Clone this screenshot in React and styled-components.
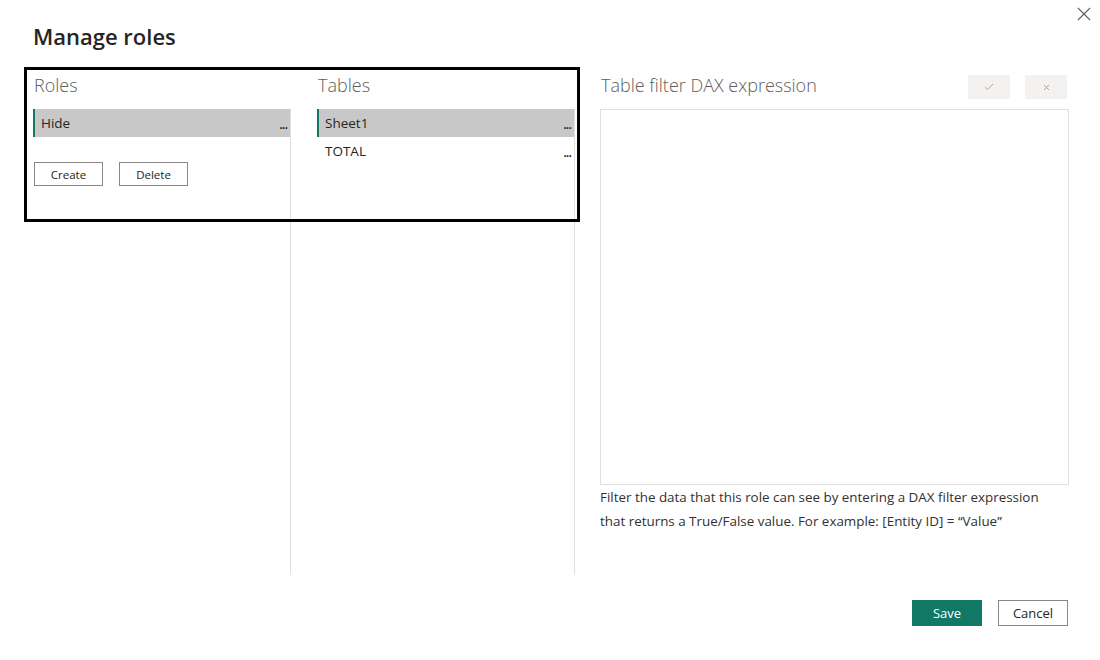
import styled, { createGlobalStyle } from "styled-components";

const Global = createGlobalStyle`
  html, body {
    margin: 0;
    padding: 0;
    background: #fff;
  }
  * {
    box-sizing: border-box;
  }
`;

const Dialog = styled.div`
  position: relative;
  width: 1100px;
  height: 660px;
  overflow: hidden;
  background: #fff;
  font-family: "Open Sans", "Noto Sans", sans-serif;
  color: #252423;
  display: flex;
  flex-direction: column;
`;

const Title = styled.h1`
  margin: 0;
  padding: 21px 0 0 33px;
  height: 67px;
  font-size: 22px;
  font-weight: 600;
  color: #252423;
`;

const CloseBtn = styled.button`
  position: absolute;
  top: 6px;
  right: 8px;
  width: 16px;
  height: 16px;
  padding: 0;
  border: 0;
  background: none;
  display: flex;
  align-items: center;
  justify-content: center;
`;

const Body = styled.div`
  display: flex;
  padding-left: 33px;
  height: 508px;
`;

const Column = styled.div`
  display: flex;
  flex-direction: column;
  width: ${(p) => p.$width}px;
  padding-left: ${(p) => p.$pad || 0}px;
`;

const Heading = styled.div`
  height: 42px;
  display: flex;
  align-items: center;
  justify-content: space-between;
  font-size: 18px;
  font-weight: 300;
  color: #605e5c;
  padding-left: 1px;
  padding-bottom: 6px;
`;

const List = styled.div`
  flex: 1;
  display: flex;
  flex-direction: column;
  border-right: 1px solid #e1dfdd;
`;

const Row = styled.div`
  height: 28px;
  display: flex;
  align-items: center;
  justify-content: space-between;
  padding: 0 3px 0 ${(p) => (p.$selected ? 6 : 8)}px;
  font-size: 13.5px;
  color: #252423;
  background: ${(p) => (p.$selected ? "#c8c8c8" : "transparent")};
  border-left: ${(p) => (p.$selected ? "2px solid #117865" : "none")};
`;

const More = styled.span`
  font-size: 13px;
  font-weight: 600;
  letter-spacing: -1px;
  padding-top: 1px;
`;

const ButtonRow = styled.div`
  display: flex;
  gap: 16px;
  margin-top: 25px;
  padding-left: 1px;
`;

const SmallButton = styled.button`
  width: 69px;
  height: 24px;
  padding: 0;
  border: 1px solid #8a8886;
  background: #fff;
  font-family: inherit;
  font-size: 11.5px;
  color: #252423;
`;

const IconButton = styled.button`
  width: 42px;
  height: 24px;
  border: 0;
  padding: 0;
  background: #f3f2f1;
  display: flex;
  align-items: center;
  justify-content: center;
`;

const HeadActions = styled.div`
  display: flex;
  gap: 15px;
  margin-right: 2px;
  margin-top: 4px;
`;

const Editor = styled.div`
  height: 376px;
  border: 1px solid #e1dfdd;
`;

const Help = styled.p`
  margin: 0;
  font-size: 13.4px;
  line-height: 24px;
  color: #323130;
`;

const Footer = styled.div`
  display: flex;
  justify-content: flex-end;
  gap: 16px;
  padding: 25px 32px 0 0;
`;

const FooterButton = styled.button`
  width: 70px;
  height: 26px;
  padding: 0;
  font-family: inherit;
  font-size: 13px;
  border: 1px solid ${(p) => (p.$primary ? "#117865" : "#8a8886")};
  background: ${(p) => (p.$primary ? "#117865" : "#fff")};
  color: ${(p) => (p.$primary ? "#fff" : "#252423")};
`;

const Highlight = styled.div`
  position: absolute;
  left: 24px;
  top: 67px;
  width: 556px;
  height: 155px;
  border: 3px solid #000;
  pointer-events: none;
`;

const App = () => {
  return (
    <Dialog>
      <Global />
      <Title>Manage roles</Title>
      <CloseBtn>
        <svg width="14" height="14" viewBox="0 0 14 14">
          <path d="M1 1L13 13M13 1L1 13" stroke="#605e5c" strokeWidth="1.1" fill="none" />
        </svg>
      </CloseBtn>
      <Body>
        <Column $width={258}>
          <Heading>Roles</Heading>
          <List>
            <Row $selected>
              <span>Hide</span>
              <More>...</More>
            </Row>
            <ButtonRow>
              <SmallButton>Create</SmallButton>
              <SmallButton>Delete</SmallButton>
            </ButtonRow>
          </List>
        </Column>
        <Column $width={284} $pad={26}>
          <Heading>Tables</Heading>
          <List>
            <Row $selected>
              <span>Sheet1</span>
              <More>...</More>
            </Row>
            <Row>
              <span>TOTAL</span>
              <More>...</More>
            </Row>
          </List>
        </Column>
        <Column $width={494} $pad={25}>
          <Heading>
            <span>Table filter DAX expression</span>
            <HeadActions>
              <IconButton>
                <svg width="10" height="8" viewBox="0 0 10 8">
                  <path d="M1 4.2L3.6 6.6L9 1" stroke="#a19f9d" strokeWidth="0.9" fill="none" />
                </svg>
              </IconButton>
              <IconButton>
                <svg width="7" height="7" viewBox="0 0 7 7">
                  <path d="M1 1L6 6M6 1L1 6" stroke="#a19f9d" strokeWidth="0.9" fill="none" />
                </svg>
              </IconButton>
            </HeadActions>
          </Heading>
          <Editor />
          <Help>
            Filter the data that this role can see by entering a DAX filter expression
            <br />
            that returns a True/False value. For example: [Entity ID] = “Value”
          </Help>
        </Column>
      </Body>
      <Footer>
        <FooterButton $primary>Save</FooterButton>
        <FooterButton>Cancel</FooterButton>
      </Footer>
      <Highlight />
    </Dialog>
  );
};

export default App;
